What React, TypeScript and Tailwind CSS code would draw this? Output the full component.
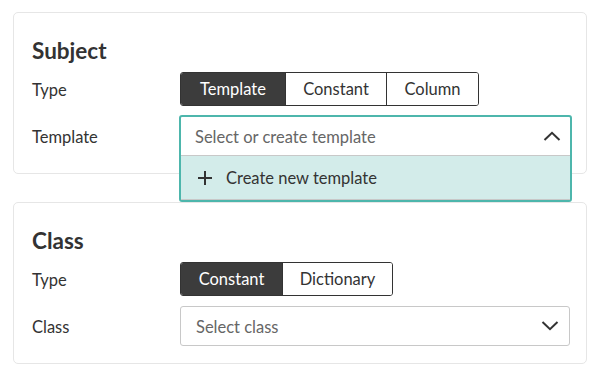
import React from 'react';

const font = { fontFamily: 'Lato, "Noto Sans", sans-serif' };

interface Segment {
  label: string;
  width: string;
}

const SegmentGroup: React.FC<{ segments: Segment[]; active: number }> = ({ segments, active }) => (
  <div className="flex h-[34px] rounded-[3px] border border-[#333333] overflow-hidden">
    {segments.map((s, i) => (
      <div
        key={s.label}
        className={`flex items-center justify-center text-[16.5px] ${s.width} ${i > 0 ? 'border-l border-[#333333]' : ''} ${
          i === active ? 'bg-[#3c3c3c] text-white' : 'bg-white text-[#333333]'
        }`}
      >
        {s.label}
      </div>
    ))}
  </div>
);

const Chevron: React.FC<{ up?: boolean }> = ({ up }) => (
  <svg width="18" height="10" viewBox="0 0 18 10" className="shrink-0">
    <path
      d={up ? 'M1.5 9 L9 1.8 L16.5 9' : 'M1.5 1 L9 8.2 L16.5 1'}
      fill="none"
      stroke="#333333"
      strokeWidth="2"
    />
  </svg>
);

const Row: React.FC<{ label: string; className?: string; children: React.ReactNode }> = ({
  label,
  className = '',
  children
}) => (
  <div className={`flex items-center ${className}`}>
    <div className="w-[148px] shrink-0 pt-[3px] text-[16.5px] text-[#333333]">{label}</div>
    <div className="flex-1">{children}</div>
  </div>
);

const Card: React.FC<{ title: string; className?: string; children: React.ReactNode }> = ({
  title,
  className = '',
  children
}) => (
  <div className={`rounded-[5px] border border-[#e6e6e6] bg-white pt-[26px] pb-[17px] pl-[18px] pr-[16px] ${className}`}>
    <h2 className="h-6 leading-6 text-[22.5px] font-bold text-[#333333] mb-[9px]">{title}</h2>
    {children}
  </div>
);

export default function App() {
  return (
    <div className="w-[601px] h-[377px] bg-white pt-3 pl-[13px] pr-[14px]" style={font}>
      <Card title="Subject">
        <Row label="Type">
          <div className="flex">
            <SegmentGroup
              active={0}
              segments={[
                { label: 'Template', width: 'w-[104px]' },
                { label: 'Constant', width: 'w-[101px]' },
                { label: 'Column', width: 'w-[92px]' }
              ]}
            />
          </div>
        </Row>
        <Row label="Template" className="mt-[10px]">
          <div className="relative h-10">
            <div className="absolute -left-px -top-px -right-[2px] z-10 rounded-[3px] border-2 border-[#4db6ac] bg-white">
              <div className="flex h-[39px] items-center justify-between border-b border-[#c8c8c8] pl-[14px] pr-[9px]">
                <span className="pt-[3px] text-[16.5px] text-[#666666]">Select or create template</span>
                <Chevron up />
              </div>
              <div className="flex h-[44px] items-center gap-[13px] bg-[#d3ecea] pl-[16px] border-b border-[#c8c8c8]">
                <svg width="16" height="16" viewBox="0 0 16 16">
                  <path d="M8 1 V15 M1 8 H15" stroke="#333333" strokeWidth="2" />
                </svg>
                <span className="pt-[2px] text-[16.5px] text-[#333333]">Create new template</span>
              </div>
            </div>
          </div>
        </Row>
      </Card>

      <Card title="Class" className="mt-[28px]">
        <Row label="Type">
          <div className="flex">
            <SegmentGroup
              active={0}
              segments={[
                { label: 'Constant', width: 'w-[101px]' },
                { label: 'Dictionary', width: 'w-[110px]' }
              ]}
            />
          </div>
        </Row>
        <Row label="Class" className="mt-[10px]">
          <div className="flex h-10 items-center justify-between rounded-[3px] border border-[#c8c8c8] bg-white pl-[15px] pr-[10px]">
            <span className="pt-[3px] text-[16.5px] text-[#666666]">Select class</span>
            <Chevron />
          </div>
        </Row>
      </Card>
    </div>
  );
}
